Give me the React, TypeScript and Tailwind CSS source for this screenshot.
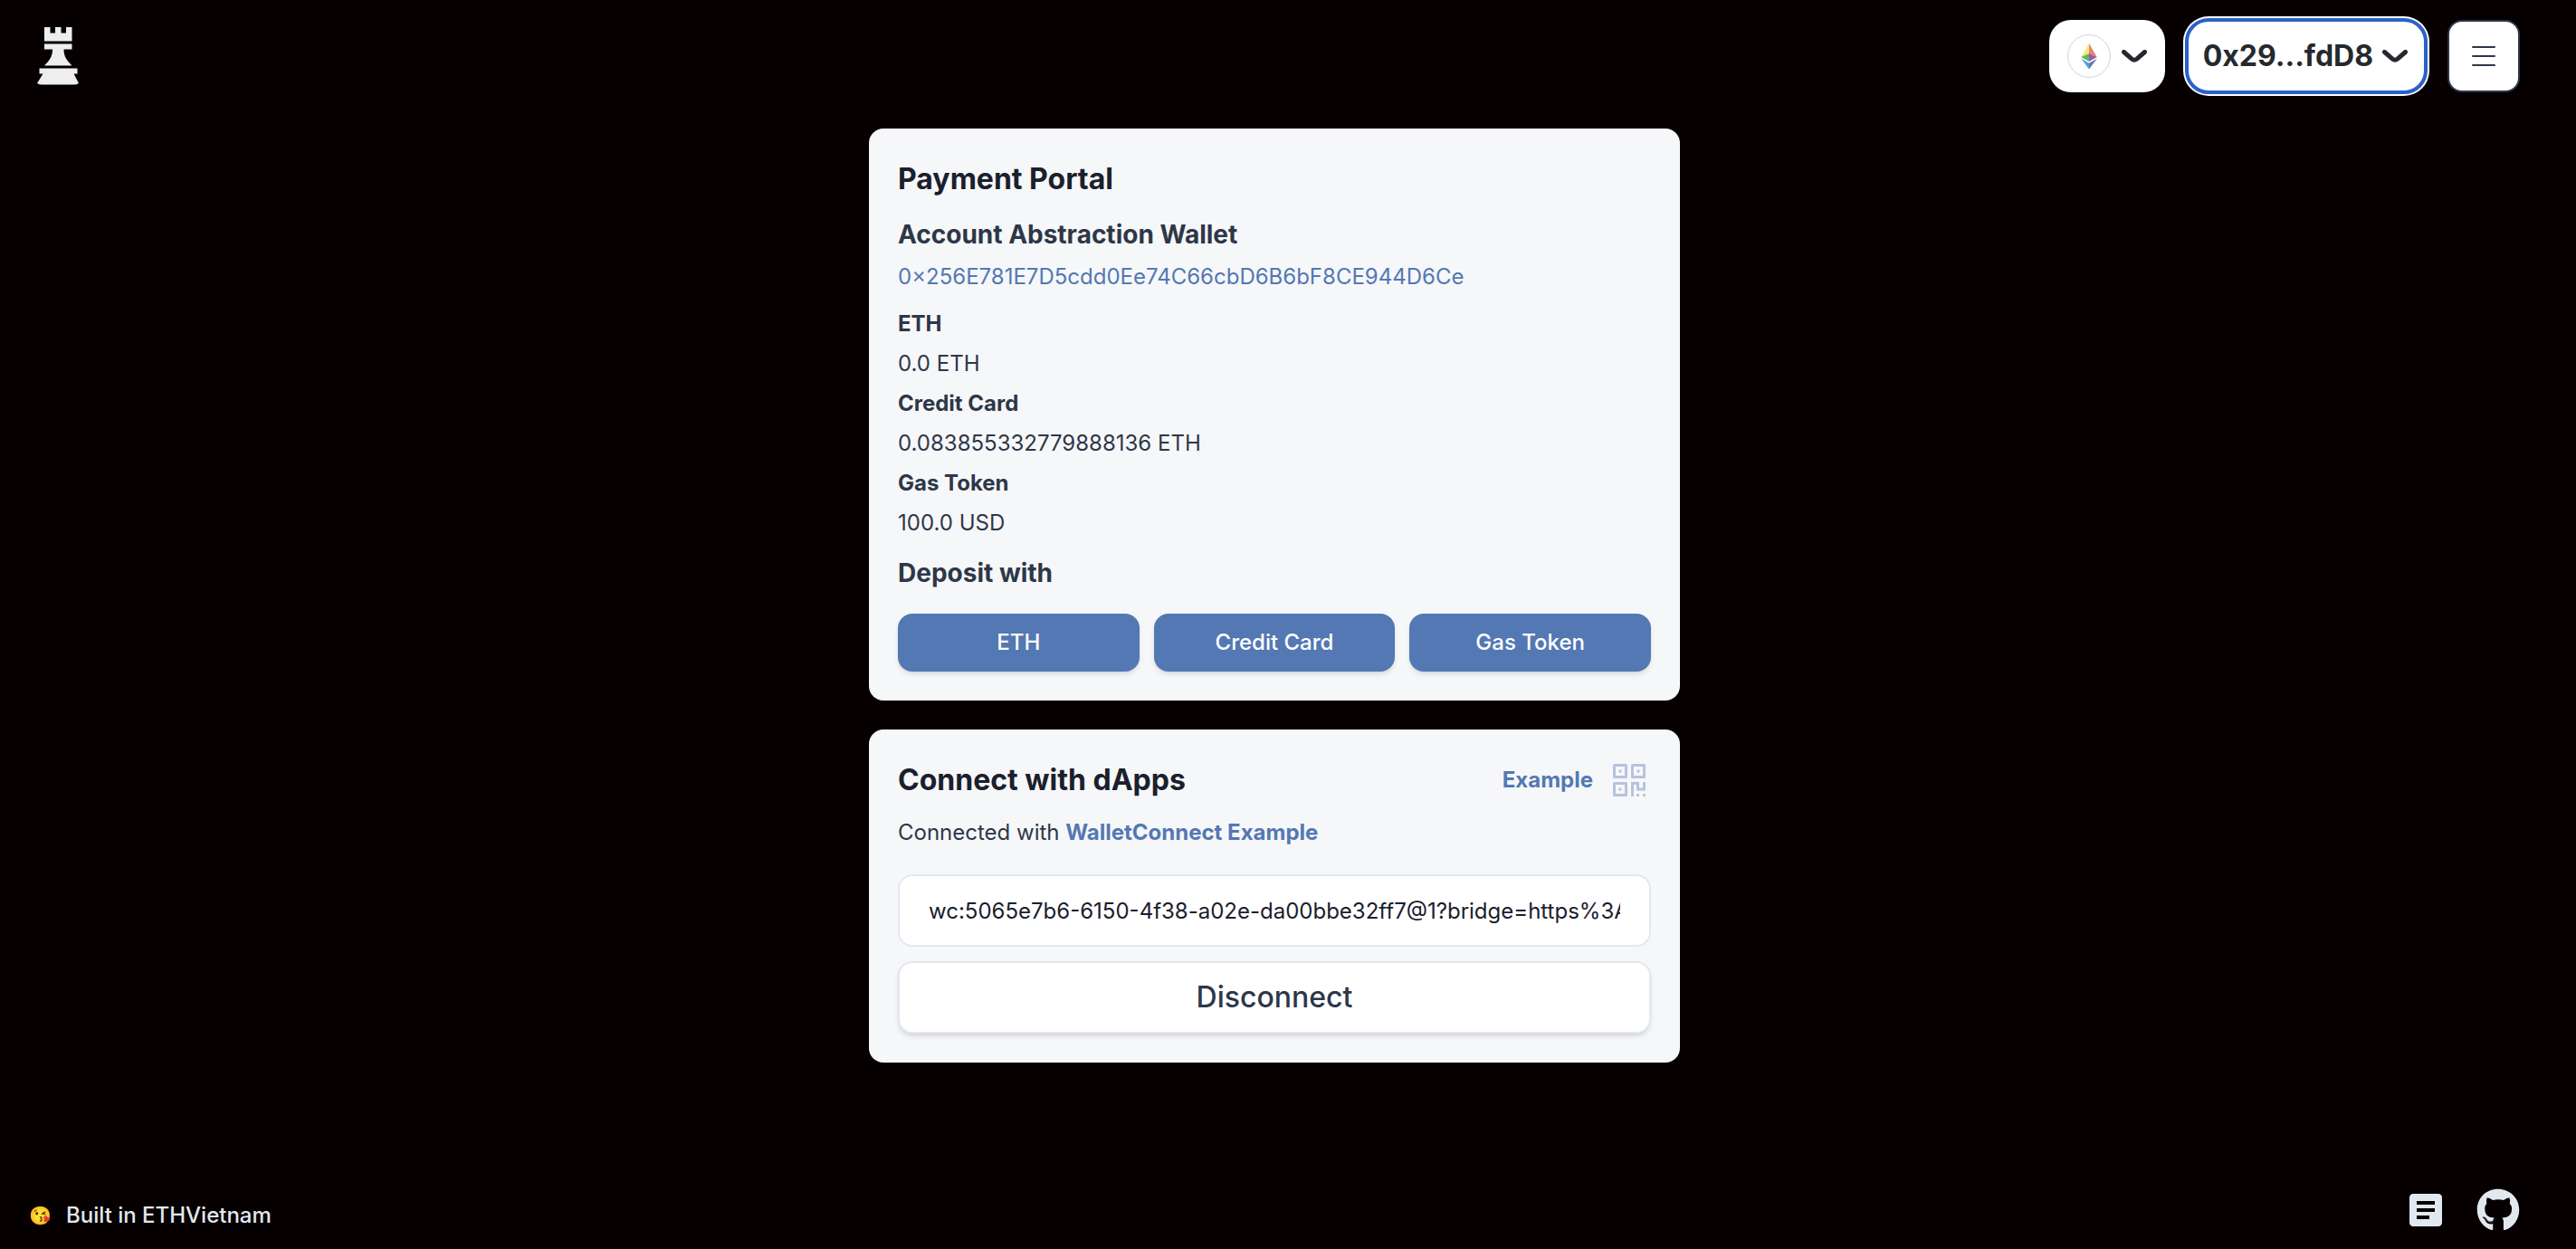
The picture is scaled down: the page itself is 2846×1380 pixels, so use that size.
import React from "react";
import { MdArticle } from "react-icons/md";
import { FaGithub } from "react-icons/fa";

const balances = [
  { label: "ETH", value: "0.0 ETH" },
  { label: "Credit Card", value: "0.083855332779888136 ETH" },
  { label: "Gas Token", value: "100.0 USD" },
];

const depositMethods = ["ETH", "Credit Card", "Gas Token"];

function RookLogo() {
  return (
    <svg viewBox="0 0 46 64" className="h-16 w-[46px] fill-[#eeeeee]" role="img" aria-label="Home">
      <path d="M8 0h6.500v6.500h5.500v-6.500h6.500v6.500h5.500v-6.500h6.500v15.500h-30.500z" />
      <path d="M8 18.500h30.500v6h-9c0 9 4 12.500 9 18h-30.500c5-5.500 9-9 9-18h-9z" />
      <path d="M2.500 45.500h42v6h-4l5.500 10.500q-2.500 1.500-5 1.500h-36q-2.500 0-5-1.500l6.500-10.500h-4z" />
    </svg>
  );
}

function EthereumIcon() {
  return (
    <svg viewBox="0 0 48 48" className="size-12" aria-hidden="true">
      <circle cx="24" cy="24" r="23.500" fill="#fff" stroke="#d4d4d4" strokeWidth="1" />
      <path d="M24 10v11l-8.800 4z" fill="#f9e87d" />
      <path d="M24 10v11l8.800 4z" fill="#e8856b" />
      <path d="M24 21v9l-8.800-5z" fill="#63b866" />
      <path d="M24 21v9l8.800-5z" fill="#a05aa5" />
      <path d="M15.200 26.800l8.800 5v6.700z" fill="#4ba7dd" />
      <path d="M32.800 26.800l-8.800 5v6.700z" fill="#6277bb" />
    </svg>
  );
}

function Chevron() {
  return (
    <svg viewBox="0 0 28 14" className="h-3.5 w-7 shrink-0" fill="none" aria-hidden="true">
      <path d="M2.500 2.500l8.700 7.600q2.800 2.200 5.600 0l8.700-7.600" stroke="#25292e" strokeWidth="5" strokeLinecap="round" />
    </svg>
  );
}

function MenuIcon() {
  return (
    <svg viewBox="0 0 26 24" className="h-6 w-[26px]" fill="none" aria-hidden="true">
      <path d="M1 2h24M1 12h24M1 22h24" stroke="#2d3748" strokeWidth="2" strokeLinecap="round" />
    </svg>
  );
}

function QrIcon() {
  return (
    <svg viewBox="0 0 48 48" className="size-12" fill="none" aria-hidden="true">
      <g stroke="#b5c4df" strokeWidth="3" strokeLinejoin="round">
        <path d="M7.500 7.500h13v13h-13zM27.500 7.500h13v13h-13zM7.500 27.500h13v13h-13z" />
      </g>
      <g fill="#b5c4df">
        <path d="M12.500 12.500h3v3h-3zM32.500 12.500h3v3h-3zM12.500 32.500h3v3h-3z" />
        <path d="M26 26h9v6.500h4v-6.500h3v9.500h-10v-6.500h-3v13h-3zM32 39h3v3h-3zM39 39h3v3h-3z" />
      </g>
    </svg>
  );
}

function Header() {
  return (
    <header className="flex items-center justify-between px-8 pt-[22px]">
      <a href="#home" className="ml-[9px]">
        <RookLogo />
      </a>
      <div className="flex gap-6">
        <button aria-label="Ethereum network" className="flex h-20 items-center gap-3 rounded-3xl bg-white px-5">
          <EthereumIcon />
          <Chevron />
        </button>
        <button className="flex h-20 items-center gap-2.5 rounded-3xl bg-white pr-5 pl-[18px] text-[32px] font-bold text-[#25292e] ring-4 ring-white outline-4 -outline-offset-2 outline-[#2a61cb]">
          0x29...fdD8
          <Chevron />
        </button>
        <button aria-label="Menu" className="flex size-20 items-center justify-center rounded-2xl border-2 border-[#2d3748] bg-white">
          <MenuIcon />
        </button>
      </div>
    </header>
  );
}

function PaymentPortal() {
  return (
    <section className="rounded-2xl bg-[#f6f7f9] p-8">
      <h2 className="text-[32px] leading-12 font-bold text-[#1a202c]">Payment Portal</h2>
      <h3 className="mt-4 text-[28px] leading-[42px] font-bold">Account Abstraction Wallet</h3>
      <a href="#wallet" className="mt-2 block leading-9 text-[#5378b3]">
        0×256E781E7D5cdd0Ee74C66cbD6B6bF8CE944D6Ce
      </a>
      <dl className="mt-4 flex flex-col gap-2 leading-9">
        {balances.map((b) => (
          <React.Fragment key={b.label}>
            <dt className="font-bold">{b.label}</dt>
            <dd>{b.value}</dd>
          </React.Fragment>
        ))}
      </dl>
      <h3 className="mt-4 text-[28px] leading-[42px] font-bold">Deposit with</h3>
      <div className="mt-6 grid grid-cols-3 gap-4">
        {depositMethods.map((m) => (
          <button key={m} className="h-16 rounded-2xl bg-[#5378b3] font-medium text-white shadow-md">
            {m}
          </button>
        ))}
      </div>
    </section>
  );
}

function ConnectDapps() {
  return (
    <section className="rounded-2xl bg-[#f6f7f9] p-8">
      <div className="flex items-center justify-between">
        <h2 className="text-[32px] leading-12 font-bold text-[#1a202c]">Connect with dApps</h2>
        <div className="flex items-center gap-4">
          <a href="#example" className="font-bold text-[#5378b3]">Example</a>
          <button aria-label="Scan QR code">
            <QrIcon />
          </button>
        </div>
      </div>
      <p className="mt-4 leading-9">
        Connected with <a href="#dapp" className="font-bold text-[#5378b3]">WalletConnect Example</a>
      </p>
      <input
        aria-label="WalletConnect URI"
        className="mt-7 block h-20 w-full rounded-2xl border-2 border-[#e2e8f0] bg-white px-8 text-[#1a202c]"
        defaultValue="wc:5065e7b6-6150-4f38-a02e-da00bbe32ff7@1?bridge=https%3A%2F%2Fbridge.walletconnect.org"
      />
      <button className="mt-4 h-20 w-full rounded-2xl border-2 border-[#e2e8f0] bg-white text-[32px] font-medium shadow-md">
        Disconnect
      </button>
    </section>
  );
}

export default function App() {
  return (
    <div className="flex min-h-screen flex-col bg-[#060000] pr-[30px] font-['Inter',sans-serif] text-2xl text-[#2d3748]">
      <Header />
      <main className="mx-auto mt-10 flex w-full max-w-4xl flex-col gap-8">
        <PaymentPortal />
        <ConnectDapps />
      </main>
      <footer className="mt-auto flex items-end justify-between px-8 pb-[19px] text-[#e2e8f0]">
        <p className="flex items-center gap-4 leading-9 font-medium">
          <span className="text-xl leading-9">😘</span>
          Built in ETHVietnam
        </p>
        <div className="flex items-center gap-8">
          <a href="#docs" aria-label="Documentation">
            <MdArticle className="size-12" />
          </a>
          <a href="#github" aria-label="GitHub">
            <FaGithub className="size-12" />
          </a>
        </div>
      </footer>
    </div>
  );
}
